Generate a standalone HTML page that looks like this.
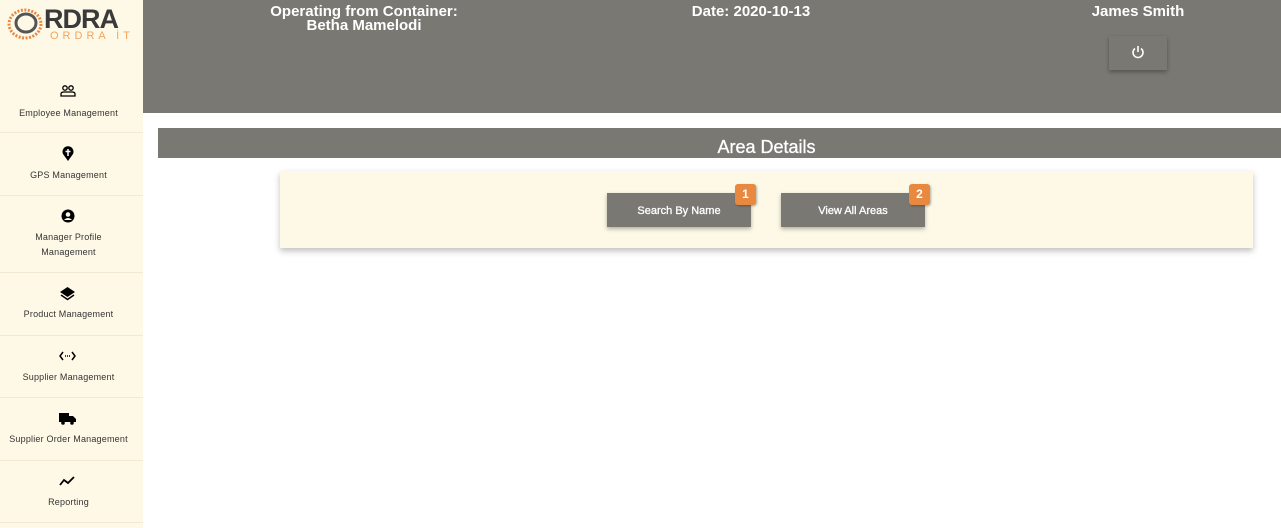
<!DOCTYPE html>
<html><head><style>
body{margin:0;width:1281px;height:528px;overflow:hidden;background:#fff;font-family:"Liberation Sans",sans-serif;position:relative}
.side{position:absolute;left:0;top:0;width:143px;height:528px;background:#fef9e6}
.item{position:absolute;left:0;width:143px;border-bottom:1px solid #f1ead3;text-align:center;font-size:9px;color:#333;line-height:15px;letter-spacing:0.2px}
.item svg{position:absolute;left:60px}
.item div{margin-left:-3px}
.hdr{position:absolute;left:143px;top:0;width:1138px;height:113px;background:#7a7873;color:#fff;font-weight:bold;font-size:15px}
.t{position:absolute;text-align:center;line-height:14px}
.bar{position:absolute;left:158px;top:128px;width:1123px;height:30px;background:#7a7873;color:#fff;font-size:18px;text-align:center;line-height:38px;box-sizing:border-box;padding-left:94px;-webkit-text-stroke:0.3px #fff}
.card{position:absolute;left:280px;top:171px;width:973px;height:77px;background:#fdf9e6;box-shadow:0 3px 6px rgba(0,0,0,.25)}
.btn{position:absolute;top:22px;width:144px;height:34px;background:#7a7873;color:#fff;font-size:11px;text-align:center;line-height:36px;box-shadow:0 2px 4px rgba(0,0,0,.3);-webkit-text-stroke:0.3px #fff}
.bdg{position:absolute;top:-9px;right:-5px;width:21px;height:21px;background:#e8893f;border-radius:3px;font-weight:bold;font-size:12px;line-height:20px;box-shadow:1px 1px 2px rgba(0,0,0,.3);-webkit-text-stroke:0}
</style></head><body>
<div class="side">
 <svg style="position:absolute;left:5px;top:5px" width="40" height="38"><ellipse cx="20" cy="19" rx="16" ry="14" fill="none" stroke="#e8893f" stroke-width="3" stroke-dasharray="2 1.5"/><ellipse cx="21" cy="18" rx="10" ry="9" fill="none" stroke="#555" stroke-width="3"/></svg>
 <div style="position:absolute;left:44px;top:4px;font-size:27px;font-weight:bold;color:#3a3a3a;letter-spacing:-1px">RDRA</div>
 <div style="position:absolute;left:50px;top:30px;font-size:11px;color:#f3a55c;letter-spacing:4px">ORDRA İT</div>
 <div class="item" style="top:70px;height:62px"><svg style="top:15px" width="16" height="12" viewBox="0 0 16 12" fill="none" stroke="#000" stroke-width="1.3"><circle cx="5" cy="3" r="2.2"/><circle cx="11" cy="3" r="2.2"/><path d="M1 11v-2q0-2 3-2h8q3 0 3 2v2z"/></svg><div style="position:absolute;top:36px;width:100%">Employee Management</div></div>
 <div class="item" style="top:133px;height:62px"><svg style="top:13px;left:62px" width="12" height="15" viewBox="0 0 12 15"><path d="M6 15L1 8A5.5 5.5 0 1 1 11 8z" fill="#000"/><path d="M6 3v7M3.5 5.5h5" stroke="#fff" stroke-width="1.5"/></svg><div style="position:absolute;top:35px;width:100%">GPS Management</div></div>
 <div class="item" style="top:196px;height:76px"><svg style="top:13px;left:61px" width="14" height="14" viewBox="0 0 14 14"><circle cx="7" cy="7" r="6.5" fill="#000"/><circle cx="7" cy="5.5" r="2.3" fill="#fef9e6"/><path d="M3 11q4-4 8 0" fill="#fef9e6"/></svg><div style="position:absolute;top:34px;width:100%">Manager Profile<br>Management</div></div>
 <div class="item" style="top:273px;height:62px"><svg style="top:14px;left:60px" width="15" height="14" viewBox="0 0 15 14"><path d="M7.5 0L15 5 7.5 10 0 5z" fill="#000"/><path d="M1 8l6.5 4.5L14 8" stroke="#000" stroke-width="1.5" fill="none"/></svg><div style="position:absolute;top:34px;width:100%">Product Management</div></div>
 <div class="item" style="top:336px;height:61px"><svg style="top:15px;left:59px" width="17" height="10" viewBox="0 0 17 10" stroke="#000" stroke-width="1.5" fill="none"><path d="M4 1L1 5l3 4M13 1l3 4-3 4"/><path d="M6 5h1M8 5h1M10 5h1"/></svg><div style="position:absolute;top:34px;width:100%">Supplier Management</div></div>
 <div class="item" style="top:398px;height:62px"><svg style="top:14px;left:59px" width="17" height="13" viewBox="0 0 17 13"><rect x="0" y="1" width="10" height="9" fill="#000"/><path d="M10 4h4l3 3v3h-7z" fill="#000"/><circle cx="4" cy="11" r="1.8" fill="#000"/><circle cx="13" cy="11" r="1.8" fill="#000"/></svg><div style="position:absolute;top:34px;width:100%">Supplier Order Management</div></div>
 <div class="item" style="top:461px;height:61px"><svg style="top:15px;left:59px" width="17" height="10" viewBox="0 0 17 10"><path d="M1 9l4-5 4 3 6-6" stroke="#000" stroke-width="1.8" fill="none"/></svg><div style="position:absolute;top:34px;width:100%">Reporting</div></div>
</div>
<div class="hdr">
 <div class="t" style="left:111px;top:5px;width:220px">Operating from Container:<br>Betha Mamelodi</div>
 <div class="t" style="left:530px;top:5px;width:156px">Date: 2020-10-13</div>
 <div class="t" style="left:935px;top:5px;width:120px">James Smith</div>
 <div style="position:absolute;left:966px;top:36px;width:58px;height:34px;background:#7a7873;box-shadow:0 2px 4px rgba(0,0,0,.3)"><svg style="position:absolute;left:22px;top:9px" width="14" height="14" viewBox="0 0 14 14" fill="none" stroke="#fff" stroke-width="1.6"><path d="M4 3.5A5 5 0 1 0 10 3.5"/><path d="M7 1v6"/></svg></div>
</div>
<div class="bar">Area Details</div>
<div class="card">
 <div class="btn" style="left:327px">Search By Name<div class="bdg">1</div></div>
 <div class="btn" style="left:501px">View All Areas<div class="bdg">2</div></div>
</div>
</body></html>
